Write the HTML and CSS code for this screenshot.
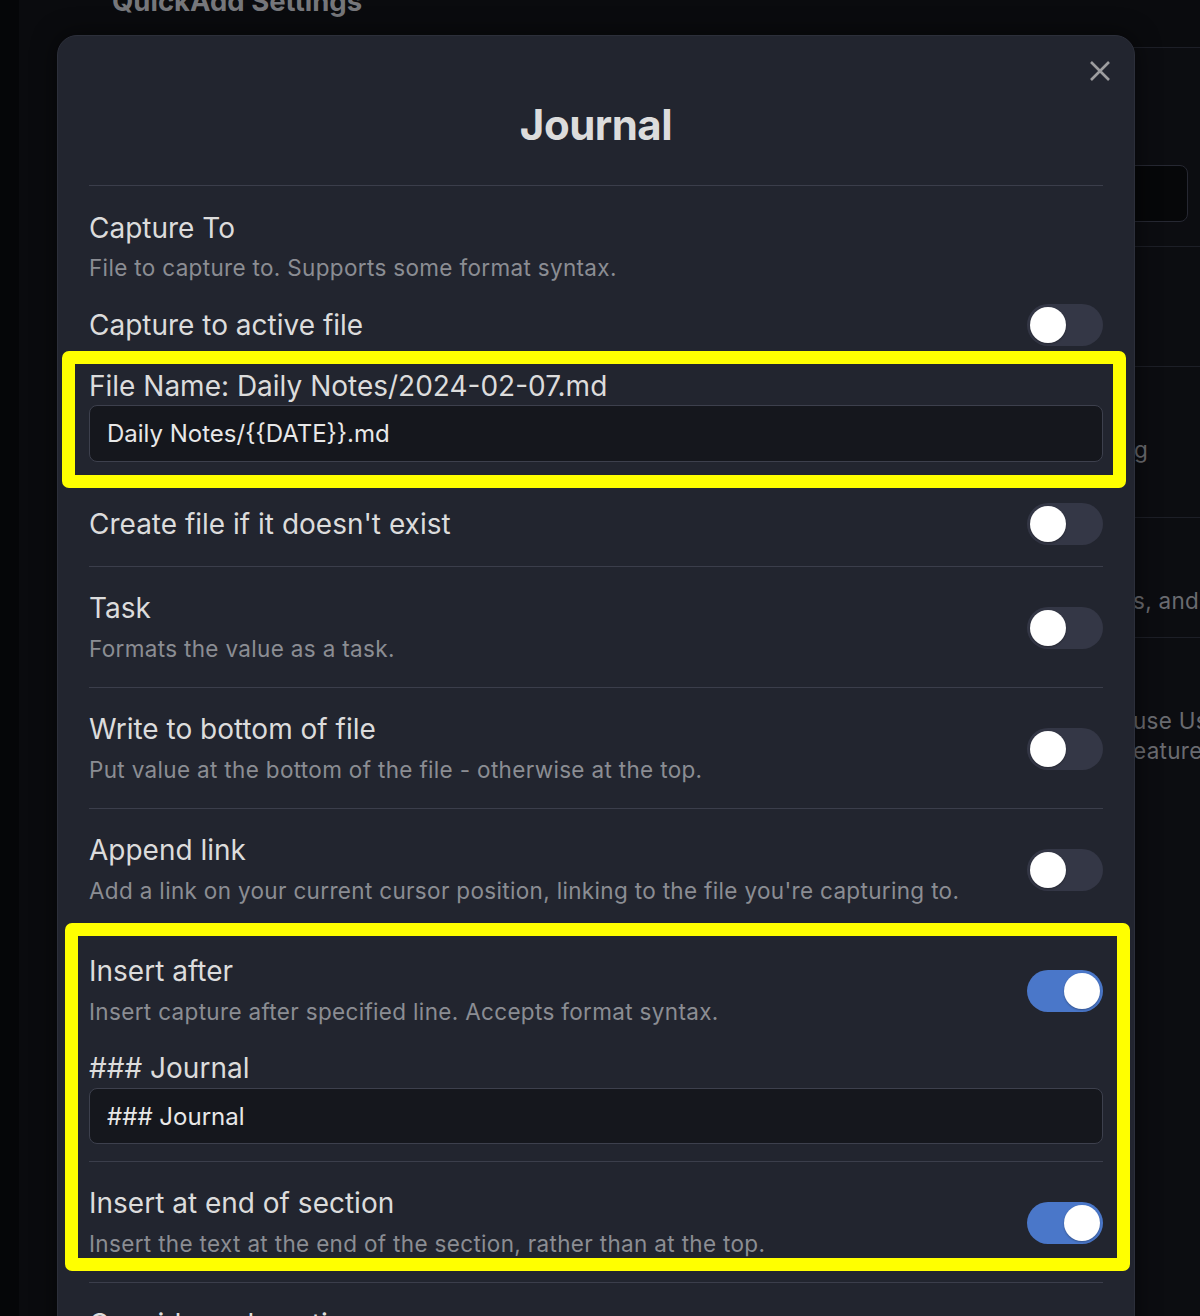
FILE: index.html
```html
<!DOCTYPE html>
<html lang="en">
<head>
<meta charset="utf-8">
<title>QuickAdd Settings – Journal</title>
<link rel="stylesheet" href="styles.css">
</head>
<body>
<div class="app">
  <div class="bg-edge"></div>
  <div class="bg-main">
    <h1 class="bg-title">QuickAdd Settings</h1>
    <div class="bg-panel">
      <div class="bg-row r1"><div class="bg-left"></div><div class="bg-right"><div class="bg-input"></div></div></div>
      <div class="bg-row r2"><div class="bg-left"></div><div class="bg-right"></div></div>
      <div class="bg-row r3"><div class="bg-left"></div><div class="bg-right"><div class="bg-frag end"><span>Show the ribbon icon for this setting</span></div></div></div>
      <div class="bg-row r4"><div class="bg-left"></div><div class="bg-right"><div class="bg-frag start"><span>s, and more</span></div></div></div>
      <div class="bg-row r5 last"><div class="bg-left"></div><div class="bg-right"><div class="bg-frag start"><span>use User Scripts</span></div><div class="bg-frag start"><span>eatures</span></div></div></div>
    </div>
  </div>
</div>

<div class="modal-layer">
  <div class="modal">
    <button class="modal-close" aria-label="Close">
      <svg width="22" height="22" viewBox="0 0 22 22"><path d="M2 2 L20 20 M20 2 L2 20" stroke="#9d9d9f" stroke-width="2.6" stroke-linecap="butt" fill="none"/></svg>
    </button>
    <div class="modal-header"><h2 class="modal-title">Journal</h2></div>

    <div class="setting first">
      <div class="info">
        <div class="name">Capture To</div>
        <div class="desc">File to capture to. Supports some format syntax.</div>
      </div>
    </div>

    <div class="setting single active-file">
      <div class="info"><div class="name">Capture to active file</div></div>
      <div class="toggle"><span class="knob"></span></div>
    </div>

    <div class="field-group highlight hl-1">
      <div class="field-label">File Name: Daily Notes/2024-02-07.md</div>
      <input class="text-input" type="text" value="Daily Notes/{{DATE}}.md" readonly>
    </div>

    <div class="setting single create-file">
      <div class="info"><div class="name">Create file if it doesn't exist</div></div>
      <div class="toggle"><span class="knob"></span></div>
    </div>

    <div class="setting row">
      <div class="info">
        <div class="name">Task</div>
        <div class="desc">Formats the value as a task.</div>
      </div>
      <div class="toggle"><span class="knob"></span></div>
    </div>

    <div class="setting row">
      <div class="info">
        <div class="name">Write to bottom of file</div>
        <div class="desc">Put value at the bottom of the file - otherwise at the top.</div>
      </div>
      <div class="toggle"><span class="knob"></span></div>
    </div>

    <div class="setting row">
      <div class="info">
        <div class="name">Append link</div>
        <div class="desc">Add a link on your current cursor position, linking to the file you're capturing to.</div>
      </div>
      <div class="toggle"><span class="knob"></span></div>
    </div>

    <div class="highlight hl-2">
      <div class="setting row insert-after">
        <div class="info">
          <div class="name">Insert after</div>
          <div class="desc">Insert capture after specified line. Accepts format syntax.</div>
        </div>
        <div class="toggle on"><span class="knob"></span></div>
      </div>
      <div class="field-group after-line">
        <div class="field-label">### Journal</div>
        <input class="text-input" type="text" value="### Journal" readonly>
      </div>
      <div class="setting row">
        <div class="info">
          <div class="name">Insert at end of section</div>
          <div class="desc">Insert the text at the end of the section, rather than at the top.</div>
        </div>
        <div class="toggle on"><span class="knob"></span></div>
      </div>
    </div>

    <div class="setting row">
      <div class="info">
        <div class="name">Consider subsections</div>
        <div class="desc">Also include the section's subsections.</div>
      </div>
      <div class="toggle"><span class="knob"></span></div>
    </div>
  </div>
</div>
</body>
</html>
```

FILE: styles.css
```css
html, body {
  margin: 0;
  padding: 0;
  width: 1200px;
  height: 1316px;
  overflow: hidden;
  background: #0a0b0e;
  font-family: Inter, "Noto Sans", sans-serif;
}

/* ---------- background settings window ---------- */
.app {
  display: flex;
  height: 1316px;
}
.bg-edge {
  width: 19px;
  flex-shrink: 0;
  background: #050608;
}
.bg-main {
  flex: 1;
  display: flex;
  flex-direction: column;
  min-width: 0;
}
.bg-title {
  margin: -14px 0 31px 93px;
  font-size: 27.5px;
  line-height: 30px;
  font-weight: 700;
  color: #76777b;
}
.bg-panel {
  margin-left: 81px;
  border-top: 1px solid #1d1f27;
  background: #0c0d11;
  flex: 1;
  display: flex;
  flex-direction: column;
}
.bg-row {
  display: grid;
  grid-template-columns: 1fr 64px;
  border-bottom: 1px solid #1d1f27;
}
.bg-row.last { border-bottom: none; }
.bg-row.r1 { height: 198px; }
.bg-row.r2 { height: 119px; }
.bg-row.r3 { height: 150px; }
.bg-row.r4 { height: 119px; }
.bg-right {
  min-width: 0;
  padding-top: 68px;
}
.bg-row.r1 .bg-right { padding-top: 117px; }
.bg-input {
  width: 200px;
  height: 57px;
  box-sizing: border-box;
  margin-left: -148px;
  border: 1px solid #262832;
  border-radius: 8px;
  background: #060709;
}
.bg-frag {
  display: flex;
  font-size: 22.5px;
  line-height: 30px;
  color: #6a6b70;
  white-space: nowrap;
  letter-spacing: 0.3px;
}
.bg-frag span { flex-shrink: 0; }
.bg-frag.end {
  width: 12px;
  justify-content: flex-end;
}
.bg-frag.start { margin-left: -3px; }

/* ---------- modal ---------- */
.modal-layer {
  position: absolute;
  top: 0;
  left: 0;
  width: 1200px;
  height: 1316px;
  padding: 35px 0 0 57px;
  box-sizing: border-box;
}
.modal {
  position: relative;
  width: 1078px;
  box-sizing: border-box;
  padding: 0 31px 60px;
  background: #22252f;
  border: 1px solid #2c2f3a;
  border-radius: 20px;
  box-shadow: 0 0 24px rgba(0, 0, 0, 0.55);
}
.modal-close {
  position: absolute;
  top: 24px;
  right: 23px;
  width: 22px;
  height: 22px;
  padding: 0;
  border: none;
  background: none;
  display: block;
}
.modal-close svg { display: block; }
.modal-header {
  padding: 61px 0 32px;
  border-bottom: 1px solid #3b3e4b;
}
.modal-title {
  margin: 0;
  text-align: center;
  font-size: 42px;
  line-height: 56px;
  font-weight: 700;
  color: #dcdcdc;
  letter-spacing: -0.5px;
}

.setting {
  display: flex;
  align-items: center;
  justify-content: space-between;
  gap: 24px;
}
.info { min-width: 0; }
.name {
  font-size: 28px;
  line-height: 38px;
  color: #dcdcdc;
}
.desc {
  margin-top: 4px;
  font-size: 22.5px;
  line-height: 36px;
  color: #8b8d93;
  letter-spacing: 0.33px;
}
.setting.first { padding-top: 23px; }
.setting.first .desc { margin-top: 3px; }
.setting.active-file { height: 78px; }
.setting.create-file { height: 85px; }
.setting.row {
  border-top: 1px solid #3b3e4b;
  padding: 22px 0 20px;
}
.setting.row.insert-after { padding-bottom: 19px; }

.field-group { padding: 3px 0 19px; }
.field-group.after-line { padding: 0 0 17px; }
.field-label {
  font-size: 28px;
  line-height: 38px;
  color: #dcdcdc;
}
.text-input {
  display: block;
  width: 100%;
  height: 57px;
  box-sizing: border-box;
  margin: 0;
  padding: 0 17px;
  background: #15171d;
  border: 1px solid #3d404d;
  border-radius: 8px;
  font-family: Inter, "Noto Sans", sans-serif;
  font-size: 24px;
  color: #e8e8e8;
  outline: none;
}
.after-line .text-input { height: 56px; margin-top: 1px; }

.toggle {
  flex-shrink: 0;
  width: 76px;
  height: 42px;
  box-sizing: border-box;
  padding: 3px;
  border-radius: 21px;
  background: #343746;
  display: flex;
  align-items: center;
}
.toggle.on {
  background: #4a77c9;
  justify-content: flex-end;
}
.knob {
  width: 36px;
  height: 36px;
  border-radius: 50%;
  background: #ffffff;
  box-shadow: 0 1px 2px rgba(0, 0, 0, 0.3);
}

/* annotation outlines drawn over the content */
.highlight { position: relative; }
.highlight::after {
  content: "";
  position: absolute;
  border: 13px solid #ffff00;
  border-radius: 7px;
  pointer-events: none;
}
.hl-1::after { top: -13px; bottom: -7px; left: -27px; right: -23px; }
.hl-2::after { top: -6px; bottom: 11px; left: -24px; right: -27px; }
```
